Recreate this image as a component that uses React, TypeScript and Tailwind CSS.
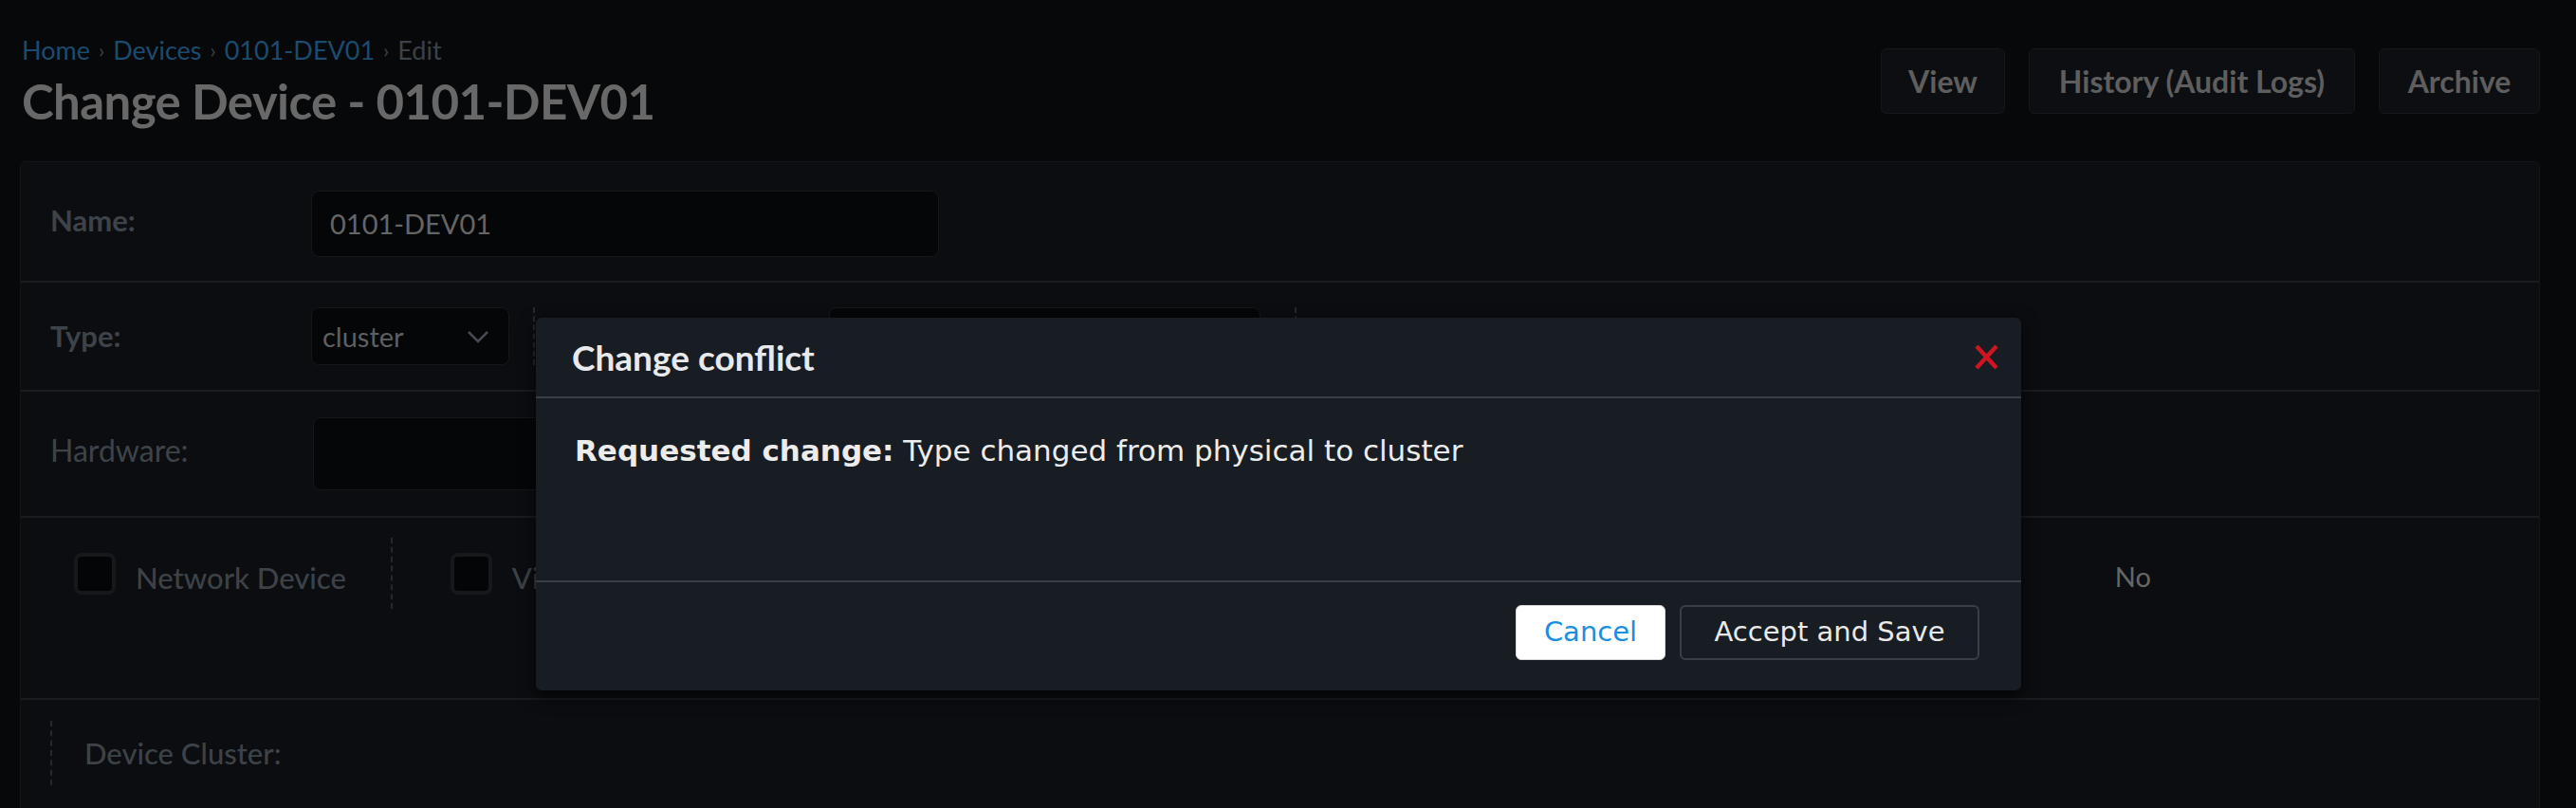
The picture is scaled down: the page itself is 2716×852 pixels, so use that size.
import React from 'react';

const crumbs = ['Home', 'Devices', '0101-DEV01'];

function TopButton({ label, width }: { label: string; width: string }) {
  return (
    <button
      className={`flex h-[69px] items-center justify-center rounded-[6px] border border-[#15171b] bg-[#0c0e12] text-[32px] font-bold text-[#5e5e5e] ${width}`}
    >
      {label}
    </button>
  );
}

function Checkbox() {
  return <span className="h-[44px] w-[44px] shrink-0 rounded-[8px] border-4 border-[#16181b] bg-[#040506]" />;
}

export default function App() {
  return (
    <div className="relative h-screen w-full overflow-hidden bg-[#07080a] font-['Lato',sans-serif]">
      <div className="flex flex-col pl-[21px] pr-[38px]">

        {/* Page header */}
        <header className="flex h-[170px] items-start justify-between">
          <div className="pl-[2px] pt-[38px]">
            <nav className="flex items-center text-[27px] leading-[30px]">
              {crumbs.map((c) => (
                <React.Fragment key={c}>
                  <span className="text-[#1b4b6e]">{c}</span>
                  <span className="px-[9px] text-[22px] text-[#3c4147]">›</span>
                </React.Fragment>
              ))}
              <span className="text-[#3c4147]">Edit</span>
            </nav>
            <h1 className="mt-[8px] text-[51px] font-bold leading-[62px] tracking-[-0.012em] text-[#686868]">
              Change Device - 0101-DEV01
            </h1>
          </div>
          <div className="mt-[51px] flex gap-[25px]">
            <TopButton label="View" width="w-[131px]" />
            <TopButton label="History (Audit Logs)" width="w-[344px]" />
            <TopButton label="Archive" width="w-[170px]" />
          </div>
        </header>

        {/* Form panel */}
        <main className="rounded-[6px] border border-[#131519] bg-[#0b0d10]">

          {/* Name */}
          <div className="flex h-[127px] items-center border-b-2 border-[#1a1c20] pl-[31px] pt-[5px]">
            <label className="w-[275px] pb-[8px] text-[31px] font-bold text-[#3e434a]">Name:</label>
            <div className="flex h-[70px] w-[662px] items-center rounded-[8px] border border-[#15171a] bg-[#050607] px-[19px] text-[29px] text-[#656565]">
              0101-DEV01
            </div>
          </div>

          {/* Type */}
          <div className="flex h-[115px] items-center border-b-2 border-[#1a1c20] pl-[31px]">
            <label className="w-[275px] text-[31px] font-bold text-[#3e434a]">Type:</label>
            <div className="flex h-[61px] w-[209px] items-center justify-between rounded-[8px] border border-[#15171a] bg-[#050607] pl-[11px] pr-[20px] text-[29px] text-[#5d5f62]">
              cluster
              <svg width="24" height="14" viewBox="0 0 24 14" fill="none">
                <path d="M2 2l10 10L22 2" stroke="#474b51" strokeWidth="2.5" />
              </svg>
            </div>
            <div className="ml-[25px] h-[61px] border-l-2 border-dashed border-[#25282c]" />
            <div className="ml-[310px] h-[61px] w-[455px] rounded-[8px] border border-[#15171a] bg-[#050607]" />
            <div className="ml-[36px] h-[61px] border-l-2 border-dashed border-[#25282c]" />
          </div>

          {/* Hardware */}
          <div className="flex h-[133px] items-center border-b-2 border-[#1a1c20] pl-[31px]">
            <label className="w-[277px] pb-[8px] text-[32px] text-[#3e434a]">Hardware:</label>
            <div className="h-[77px] w-[662px] rounded-[8px] border border-[#15171a] bg-[#050607]" />
          </div>

          {/* Flags */}
          <div className="flex h-[192px] items-start border-b-2 border-[#1a1c20] pl-[56px]">
            <div className="mt-[21px] flex h-[75px] flex-1 items-center">
              <div className="flex items-center gap-[21px]">
                <Checkbox />
                <span className="pt-[10px] text-[31px] font-medium text-[#3d4248]">Network Device</span>
              </div>
              <div className="ml-[47px] h-[75px] border-l-2 border-dashed border-[#25282c]" />
              <div className="ml-[61px] flex items-center gap-[21px]">
                <Checkbox />
                <span className="pt-[10px] text-[31px] font-medium text-[#3d4248]">Virtual Device</span>
              </div>
              <span className="ml-auto mr-[409px] pt-[6px] text-[29px] text-[#666666]">No</span>
            </div>
          </div>

          {/* Device cluster */}
          <div className="flex h-[140px] items-start pl-[31px] pt-[22px]">
            <div className="flex h-[68px] items-center border-l-2 border-dashed border-[#25282c] pl-[34px]">
              <span className="text-[31px] font-medium text-[#3d4248]">Device Cluster:</span>
            </div>
          </div>
        </main>
      </div>

      {/* Change conflict dialog */}
      <div
        role="dialog"
        className="absolute left-[565px] top-[335px] flex h-[393px] w-[1566px] flex-col rounded-[6px] bg-[#181c23] shadow-[0_6px_18px_rgba(0,0,0,0.7)]"
      >
        <div className="flex h-[85px] shrink-0 items-center justify-between border-b-2 border-[#3a3e45] pl-[38px] pr-[23px]">
          <h2 className="text-[37px] font-bold text-[#e8e9eb]">Change conflict</h2>
          <svg width="27" height="27" viewBox="0 0 27 27">
            <path d="M3 2L24 25M24 2L3 25" stroke="#cf1620" strokeWidth="4.5" />
          </svg>
        </div>
        <div className="h-[192px] shrink-0 pl-[41px] pt-[37px] font-['DejaVu_Sans',sans-serif] text-[31px] leading-[36px] text-[#ececec]">
          <b>Requested change:</b> Type changed from physical to cluster
        </div>
        <div className="flex flex-1 items-start justify-end gap-[15px] border-t-2 border-[#3a3e45] pr-[44px] pt-[24px] font-['DejaVu_Sans',sans-serif] text-[29px]">
          <button className="h-[58px] w-[158px] rounded-[6px] border border-[#d9d9d9] bg-white text-[#1a8fe0]">
            Cancel
          </button>
          <button className="h-[58px] w-[316px] rounded-[6px] border-2 border-[#3a3e45] text-[#e9e9ea]">
            Accept and Save
          </button>
        </div>
      </div>
    </div>
  );
}
